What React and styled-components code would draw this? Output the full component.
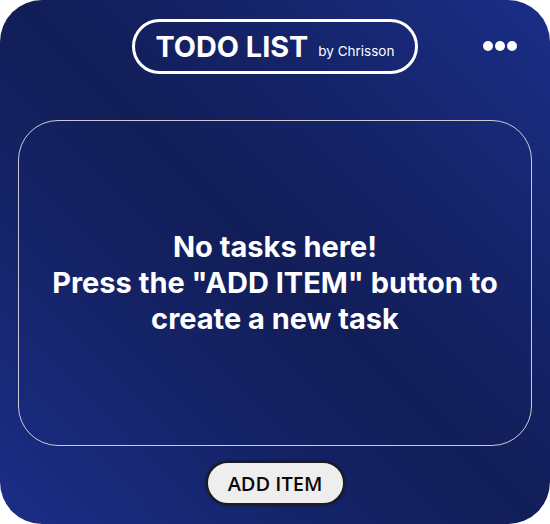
import React from "react";
import styled, { createGlobalStyle } from "styled-components";

const GlobalStyle = createGlobalStyle`
  html, body {
    margin: 0;
    padding: 0;
    background: #ffffff;
  }
  * {
    box-sizing: border-box;
  }
`;

const App = () => {
  return (
    <>
      <GlobalStyle />
      <Card>
        <Header>
          <TitlePill>
            <Title>TODO LIST</Title>
            <Byline>by Chrisson</Byline>
          </TitlePill>
          <MenuButton aria-label="menu">
            <Dot />
            <Dot />
            <Dot />
          </MenuButton>
        </Header>
        <TaskArea>
          <EmptyText>
            No tasks here!
            <br />
            Press the "ADD ITEM" button to
            <br />
            create a new task
          </EmptyText>
        </TaskArea>
        <Footer>
          <AddButton>ADD ITEM</AddButton>
        </Footer>
      </Card>
    </>
  );
};

const Card = styled.div`
  width: 550px;
  height: 524px;
  border-radius: 42px;
  overflow: hidden;
  background: linear-gradient(
    45deg,
    #1b2e88 0%,
    #15246a 28%,
    #121e58 50%,
    #15246a 72%,
    #1b2e88 100%
  );
  display: flex;
  flex-direction: column;
  font-family: Inter, "Liberation Sans", sans-serif;
  color: #ffffff;
`;

const Header = styled.div`
  position: relative;
  height: 120px;
  display: flex;
  justify-content: center;
  padding-top: 19px;
`;

const TitlePill = styled.div`
  height: 55px;
  padding: 0 21px 0 21px;
  border: 3.5px solid #ffffff;
  border-radius: 30px;
  display: flex;
  align-items: center;
  gap: 10px;
`;

const Title = styled.span`
  font-size: 28.8px;
  font-weight: 700;
`;

const Byline = styled.span`
  font-size: 13.5px;
  font-weight: 400;
  margin-top: 9px;
`;

const MenuButton = styled.div`
  position: absolute;
  right: 33px;
  top: 41px;
  display: flex;
  gap: 2px;
`;

const Dot = styled.span`
  width: 10px;
  height: 10px;
  border-radius: 50%;
  background: #ffffff;
`;

const TaskArea = styled.div`
  margin: 0 18px 0 18px;
  height: 326px;
  border: 1px solid #c9ccd8;
  border-radius: 40px;
  display: flex;
  align-items: center;
  justify-content: center;
`;

const EmptyText = styled.p`
  margin: 0;
  text-align: center;
  font-size: 29px;
  font-weight: 700;
  line-height: 36px;
  padding-top: 0;
`;

const Footer = styled.div`
  display: flex;
  justify-content: center;
  padding-top: 15px;
`;

const AddButton = styled.button`
  width: 139px;
  height: 44px;
  border: 2px solid #1c1c1c;
  border-radius: 23px;
  background: #eeeeee;
  color: #0a0a0a;
  font-family: "Open Sans", "Noto Sans", sans-serif;
  font-size: 20px;
  font-weight: 600;
  letter-spacing: 0;
  cursor: pointer;
  padding: 0;
  box-shadow: 0 0 3px rgba(0, 0, 0, 0.5);
`;

export default App;
